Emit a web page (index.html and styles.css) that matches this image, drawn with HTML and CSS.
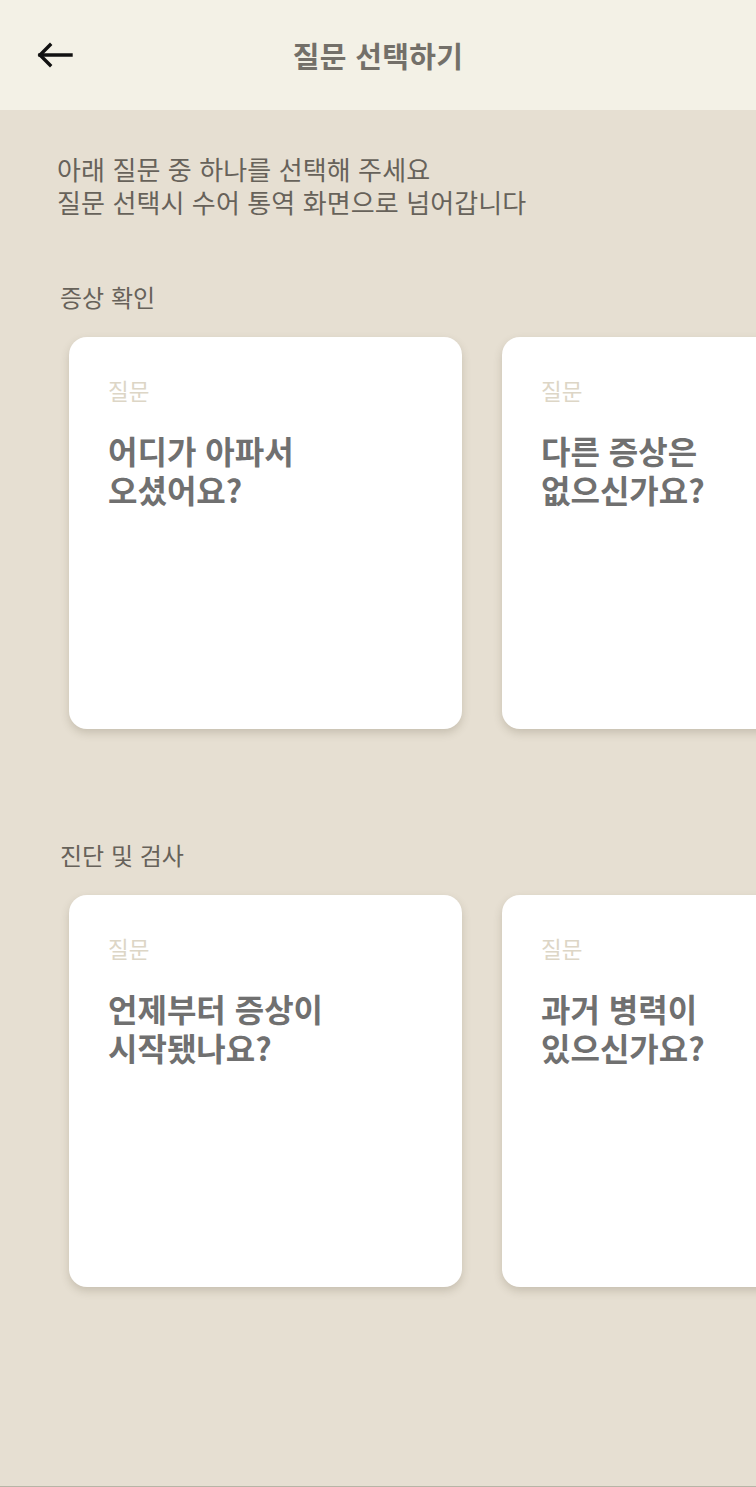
FILE: index.html
```html
<!DOCTYPE html>
<html lang="ko">
<head>
<meta charset="utf-8">
<title>질문 선택하기</title>
<link rel="stylesheet" href="styles.css">
</head>
<body>
<div class="app">
  <header class="topbar">
    <button class="back" aria-label="뒤로">
      <svg width="38" height="26" viewBox="0 0 38 26" fill="none" stroke="#111" stroke-width="3.4" stroke-linecap="square">
        <path d="M4 13H35"/>
        <path d="M14 3L4 13L14 23"/>
      </svg>
    </button>
    <h1 class="title">질문 선택하기</h1>
  </header>
  <main class="content">
    <p class="intro">아래 질문 중 하나를 선택해 주세요<br>질문 선택시 수어 통역 화면으로 넘어갑니다</p>

    <section class="group group-first">
      <h2 class="group-title">증상 확인</h2>
      <div class="cards">
        <div class="card">
          <div class="card-label">질문</div>
          <div class="card-q"><span class="q-line">어디가 아파서</span><span class="q-line">오셨어요?</span></div>
        </div>
        <div class="card">
          <div class="card-label">질문</div>
          <div class="card-q"><span class="q-line">다른 증상은</span><span class="q-line">없으신가요?</span></div>
        </div>
      </div>
    </section>

    <section class="group group-second">
      <h2 class="group-title">진단 및 검사</h2>
      <div class="cards">
        <div class="card">
          <div class="card-label">질문</div>
          <div class="card-q"><span class="q-line">언제부터 증상이</span><span class="q-line">시작됐나요?</span></div>
        </div>
        <div class="card">
          <div class="card-label">질문</div>
          <div class="card-q"><span class="q-line">과거 병력이</span><span class="q-line">있으신가요?</span></div>
        </div>
      </div>
    </section>
  </main>
</div>
</body>
</html>
```

FILE: styles.css
```css
* { box-sizing: border-box; }
html, body { margin: 0; padding: 0; }
body {
  font-family: "Noto Sans CJK KR", "Noto Sans", sans-serif;
  background: #e6dfd2;
  overflow: hidden;
}
.app {
  width: 756px;
  height: 1487px;
  background: #e6dfd2;
  border-bottom: 1px solid #b7b5a6;
  overflow: hidden;
  display: flex;
  flex-direction: column;
}
.topbar {
  height: 110px;
  flex: 0 0 110px;
  background: #f3f1e6;
  display: flex;
  align-items: center;
  justify-content: center;
  position: relative;
}
.back {
  position: absolute;
  left: 36px;
  top: 42px;
  border: 0;
  background: none;
  padding: 0;
  width: 38px;
  height: 26px;
  display: flex;
}
.title {
  margin: 0;
  font-size: 29px;
  font-weight: 700;
  color: #737069;
  letter-spacing: 0.3px;
}
.content {
  padding-top: 42px;
}
.intro {
  margin: 0 0 0 57px;
  font-size: 26px;
  line-height: 33px;
  color: #67625a;
  letter-spacing: 0.1px;
}
.group-first { margin-top: 64px; }
.group-second { margin-top: 111px; }
.group-title {
  margin: 0 0 0 60px;
  font-size: 24px;
  line-height: 30px;
  font-weight: 400;
  color: #67625a;
}
.cards {
  display: flex;
  gap: 40px;
  padding: 25px 0 0 69px;
}
.card {
  flex: 0 0 393px;
  height: 392px;
  background: #fff;
  border-radius: 18px;
  box-shadow: 0 4px 8px rgba(90, 80, 60, 0.22);
  padding: 38px 20px 0 39px;
}
.card-label {
  font-size: 22.5px;
  line-height: 30px;
  color: #ddd6c6;
}
.card-q {
  margin-top: 26px;
  display: flex;
  flex-direction: column;
  gap: 0;
}
.q-line {
  display: block;
  height: 39px;
  font-size: 32px;
  line-height: 39px;
  font-weight: 700;
  color: #707070;
}
```
